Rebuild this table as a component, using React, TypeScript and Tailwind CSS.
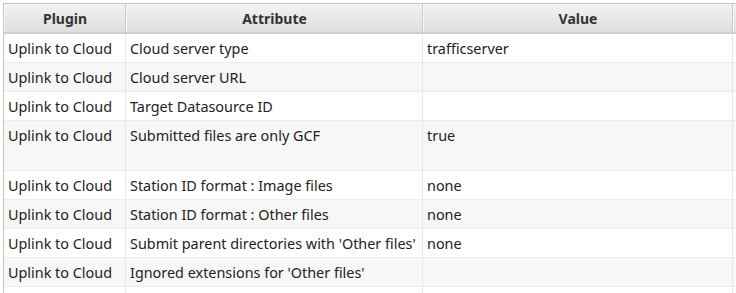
import React from "react";

type Row = {
  plugin: string;
  attribute: string;
  value: string;
  tall?: boolean;
};

const rows: Row[] = [
  { plugin: "Uplink to Cloud", attribute: "Cloud server type", value: "trafficserver" },
  { plugin: "Uplink to Cloud", attribute: "Cloud server URL", value: "" },
  { plugin: "Uplink to Cloud", attribute: "Target Datasource ID", value: "" },
  { plugin: "Uplink to Cloud", attribute: "Submitted files are only GCF", value: "true", tall: true },
  { plugin: "Uplink to Cloud", attribute: "Station ID format : Image files", value: "none" },
  { plugin: "Uplink to Cloud", attribute: "Station ID format : Other files", value: "none" },
  { plugin: "Uplink to Cloud", attribute: "Submit parent directories with 'Other files'", value: "none" },
  { plugin: "Uplink to Cloud", attribute: "Ignored extensions for 'Other files'", value: "" },
  { plugin: "", attribute: "", value: "" },
];

function HeaderCell({ label, width }: { label: string; width: string }) {
  return (
    <div
      className={`${width} flex shrink-0 items-center justify-center border-r border-[#c9c9c9] border-l border-l-[#f8f8f8] bg-gradient-to-b from-[#f3f3f3] to-[#dedede] text-[14px] font-bold text-[#333]`}
    >
      {label}
    </div>
  );
}

export default function App() {
  return (
    <div
      className="h-[293px] w-[736px] overflow-hidden bg-white pl-[3px] pt-[3px]"
      style={{ fontFamily: '"Noto Sans", "Open Sans", sans-serif' }}
    >
      <div className="w-[800px] border-l border-t border-[#c4c4c4]">
        {/* Header */}
        <div className="flex h-[30px] border-b-2 border-[#cfcfcf]">
          <HeaderCell label="Plugin" width="w-[122px]" />
          <HeaderCell label="Attribute" width="w-[297px]" />
          <HeaderCell label="Value" width="w-[310px]" />
          <HeaderCell label="" width="w-[70px]" />
        </div>

        {/* Body */}
        {rows.map((row, i) => (
          <div
            key={i}
            className={`flex border-b border-[#ececec] text-[14.4px] leading-[16px] text-[#222] ${
              row.tall ? "h-[50px]" : "h-[29px]"
            } ${i % 2 === 1 ? "bg-[#f7f7f7]" : "bg-white"}`}
          >
            <div className="w-[122px] shrink-0 truncate border-r border-[#e6e6e6] px-[4px] pt-[7px]">
              {row.plugin}
            </div>
            <div className="w-[297px] shrink-0 truncate border-r border-[#e6e6e6] px-[4px] pt-[7px]">
              {row.attribute}
            </div>
            <div className="w-[310px] shrink-0 truncate border-r border-[#e6e6e6] px-[4px] pt-[7px]">
              {row.value}
            </div>
            <div className="flex-1" />
          </div>
        ))}
      </div>
    </div>
  );
}
